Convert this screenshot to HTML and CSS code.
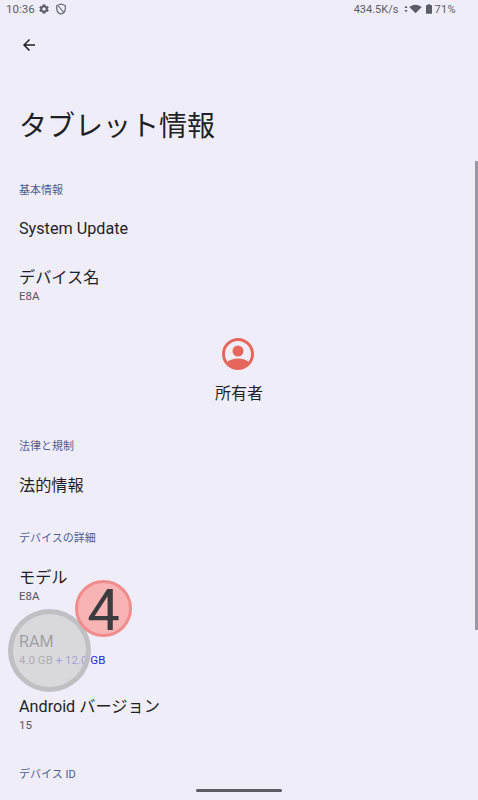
FILE: index.html
```html
<!DOCTYPE html>
<html lang="ja">
<head>
    <meta charset="UTF-8">
    <meta name="viewport" content="width=device-width, initial-scale=1.0">
    <title>タブレット情報</title>
    <link rel="stylesheet" href="styles.css">
</head>
<body>
    <div class="screen">
        <!-- Status bar -->
        <div class="status-bar">
            <div class="status-left">
                <span class="clock">10:36</span>
                <svg class="status-icon" viewBox="0 0 24 24"><path fill="#5c5c66" d="M19.4 13a7.5 7.5 0 0 0 0-2l2.100-1.600-2-3.500-2.500 1a7.500 7.500 0 0 0-1.700-1L15 3.200h-6l-.4 2.700a7.500 7.500 0 0 0-1.700 1l-2.500-1-2 3.500L4.600 11a7.500 7.500 0 0 0 0 2l-2.100 1.600 2 3.500 2.500-1a7.500 7.500 0 0 0 1.700 1l.4 2.700h6l.4-2.700a7.500 7.500 0 0 0 1.700-1l2.500 1 2-3.500zM12 15.500a3.500 3.500 0 1 1 0-7 3.500 3.500 0 0 1 0 7z"/></svg>
                <svg class="status-icon shield" viewBox="0 0 24 24"><path fill="none" stroke="#5c5c66" stroke-width="2.200" d="M12 2l8.500 3.200v6.300c0 5.200-3.600 9.100-8.500 10.500-4.900-1.400-8.500-5.300-8.500-10.500V5.200z"/><path stroke="#5c5c66" stroke-width="2.200" d="M6.500 6l11 12.500"/></svg>
            </div>
            <div class="status-right">
                <span>434.5K/s</span>
                <svg class="arrows" viewBox="0 0 6 12"><path fill="#5c5c66" d="M3 1l2.400 3.500H.6zM3 11L.6 7.500h4.800z"/></svg>
                <svg class="wifi" viewBox="0 0 24 18"><path fill="#5c5c66" d="M12 17L.5 5.500C3.600 2.600 7.600 1 12 1s8.400 1.600 11.500 4.500z"/></svg>
                <svg class="battery" viewBox="0 0 10 16"><path fill="#5c5c66" d="M3 0h4v1.500h2a1 1 0 0 1 1 1V15a1 1 0 0 1-1 1H1a1 1 0 0 1-1-1V2.500a1 1 0 0 1 1-1h2z"/></svg>
                <span class="battery-text">71%</span>
            </div>
        </div>

        <!-- Toolbar -->
        <div class="toolbar">
            <svg class="back" viewBox="0 0 24 24"><path fill="#1f1f24" d="M20 11H7.800l5.600-5.600L12 4l-8 8 8 8 1.400-1.400L7.800 13H20z"/></svg>
        </div>

        <h1 class="page-title">タブレット情報</h1>

        <div class="scrollbar"></div>

        <!-- List -->
        <div class="list">
            <div class="section-label first">基本情報</div>
            <div class="row single">System Update</div>
            <div class="row">
                <div class="row-title">デバイス名</div>
                <div class="row-sub">E8A</div>
            </div>

            <div class="owner">
                <svg class="owner-icon" viewBox="0 0 32 32">
                    <circle cx="16" cy="16" r="14.500" fill="none" stroke="#e5675c" stroke-width="3"/>
                    <circle cx="16" cy="13" r="5.500" fill="#e5675c"/>
                    <path fill="#e5675c" d="M4.500 24.500C7.500 22 11.500 20.500 16 20.500s8.500 1.500 11.500 4C25 28 20.800 30 16 30S7 28 4.500 24.500z"/>
                </svg>
                <div class="owner-name">所有者</div>
            </div>

            <div class="section-label legal">法律と規制</div>
            <div class="row single legal-row">法的情報</div>

            <div class="section-label details">デバイスの詳細</div>
            <div class="row model">
                <div class="row-title">モデル</div>
                <div class="row-sub">E8A</div>
            </div>
            <div class="row ram">
                <div class="row-title">RAM</div>
                <div class="row-sub">4.0 GB <span class="ram-extra">+ 12.0 GB</span></div>
            </div>
            <div class="row android">
                <div class="row-title">Android バージョン</div>
                <div class="row-sub">15</div>
            </div>
            <div class="section-label device-id">デバイス ID</div>
        </div>

        <!-- Annotations over the screenshot -->
        <div class="tap-circle"></div>
        <div class="step-badge">4</div>

        <div class="nav-pill"></div>
    </div>
</body>
</html>
```

FILE: styles.css
```css
/* Base */
* {
    box-sizing: border-box;
}

body {
    margin: 0;
    font-family: "Roboto", "Noto Sans CJK JP", sans-serif;
    background-color: #eeedf8;
    color: #1f1f24;
}

.screen {
    position: relative;
    width: 478px;
    height: 800px;
    overflow: hidden;
    background-color: #eeedf8;
}

/* Status bar */
.status-bar {
    display: flex;
    justify-content: space-between;
    align-items: center;
    height: 18px;
    padding: 0 22px 0 6px;
    font-size: 11px;
    color: #5c5c66;
}

.status-left,
.status-right {
    display: flex;
    align-items: center;
}

.clock {
    font-size: 11.500px;
}

.status-icon {
    width: 12px;
    height: 12px;
    margin-left: 3px;
}

.status-icon.shield {
    margin-left: 5px;
}

.arrows {
    width: 4px;
    height: 8px;
    margin-left: 6px;
}

.wifi {
    width: 13px;
    height: 10px;
    margin-left: 1px;
}

.battery {
    width: 6px;
    height: 10px;
    margin-left: 4px;
}

.battery-text {
    margin-left: 2px;
    letter-spacing: 0.4px;
}

/* Toolbar */
.toolbar {
    display: flex;
    align-items: center;
    height: 54px;
    padding-left: 20px;
}

.back {
    width: 18px;
    height: 18px;
}

.page-title {
    margin: 34px 0 0 19px;
    font-size: 28px;
    font-weight: 400;
    line-height: 42px;
}

.scrollbar {
    position: absolute;
    top: 161px;
    right: 0;
    width: 3px;
    height: 469px;
    background-color: #9a98a6;
}

/* List */
.list {
    padding: 0 19px;
}

.section-label {
    font-size: 11px;
    line-height: 16px;
    color: #4f5d8e;
}

.section-label.first {
    margin-top: 35px;
}

.section-label.legal {
    margin-top: 33px;
}

.section-label.details {
    margin-top: 33px;
}

.section-label.device-id {
    margin-top: 36px;
}

.row {
    margin-top: 25px;
}

.row.single {
    margin-top: 18px;
    font-size: 16.200px;
    line-height: 24px;
}

.row-title {
    font-size: 16.200px;
    line-height: 24px;
}

.row-sub {
    font-size: 11.500px;
    line-height: 12px;
    color: #55555e;
}

.row.model {
    margin-top: 19px;
}

.row.ram {
    margin-top: 28px;
}

.row.android {
    margin-top: 29px;
}

.row.legal-row {
    margin-top: 19px;
}

.ram-extra {
    color: #2a2ad0;
}

/* Owner */
.owner {
    display: flex;
    flex-direction: column;
    align-items: center;
    margin-top: 36px;
}

.owner-icon {
    width: 32px;
    height: 32px;
    margin-right: 2px;
}

.owner-name {
    margin-top: 12px;
    font-size: 16px;
    line-height: 24px;
}

/* Annotations */
.tap-circle {
    position: absolute;
    left: 8px;
    top: 609px;
    width: 83px;
    height: 83px;
    border: 5px solid rgba(190, 190, 195, 0.95);
    border-radius: 50%;
    background-color: rgba(208, 208, 210, 0.72);
}

.step-badge {
    position: absolute;
    left: 75px;
    top: 580px;
    width: 57px;
    height: 57px;
    border: 3px solid #f08c8c;
    border-radius: 50%;
    background-color: #f8b4b4;
    color: #3c3c40;
    font-size: 58px;
    line-height: 54px;
    text-align: center;
}

.nav-pill {
    position: absolute;
    left: 196px;
    bottom: 8px;
    width: 86px;
    height: 3px;
    border-radius: 2px;
    background-color: #5c5c64;
}
```
